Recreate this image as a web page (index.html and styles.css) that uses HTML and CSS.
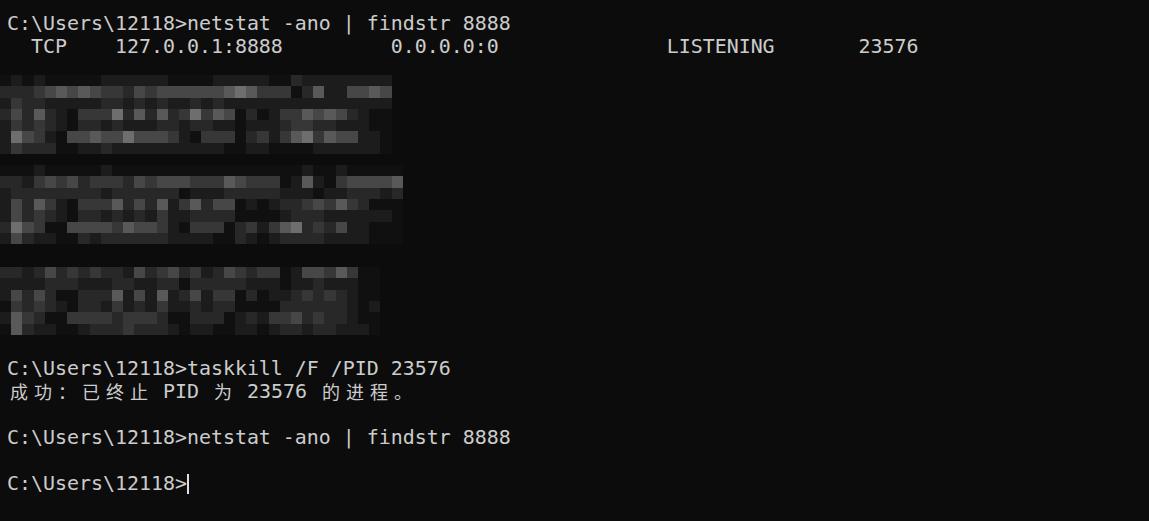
FILE: index.html
```html
<!DOCTYPE html>
<html>
<head>
<meta charset="utf-8">
<link rel="stylesheet" href="styles.css">
</head>
<body>
<div class="term">
<div class="line">C:\Users\12118&gt;netstat -ano | findstr 8888</div>
<div class="line">  TCP    127.0.0.1:8888         0.0.0.0:0              LISTENING       23576</div>
<div class="hidden">
  <div class="mosaic m1" data-rows="01010000011111100001111100211111111 22234545433243444444565333025114454 13221111122121211212111111111111111 24252103336252523635402013354542100 13232102212111221221101112332211100 16431044544644431033302313563544110 13222001121111111111001100001111110"></div>
  <div class="mosaic m2" data-rows="000100000100000000000000000100100000 221343423332434443335433301510344445 122222222122222201112222211101122212 142531033352425135244010122343532000 142321022121213112222000012221111110 264300444435443103330231356232411000 142110021222222111100210122221111000"></div>
  <div class="mosaic m3" data-rows="2212423232214234231243233014435300 1111222111221122022222111011211100 1424200222514151241330201123232100 0323210221312131121220000222222101 1532003333233320022201213342322100 0521100122232221011001101221221110"></div>
</div>
<div class="line">C:\Users\12118&gt;taskkill /F /PID 23576</div>
<div class="line"><span class="w">成</span><span class="w">功</span><span class="w">：</span><span class="w">已</span><span class="w">终</span><span class="w">止</span> PID <span class="w">为</span> 23576 <span class="w">的</span><span class="w">进</span><span class="w">程</span><span class="w">。</span></div>
<div class="line"> </div>
<div class="line">C:\Users\12118&gt;netstat -ano | findstr 8888</div>
<div class="line"> </div>
<div class="line">C:\Users\12118&gt;<span class="cursor"></span></div>
</div>
<script src="script.js"></script>
</body>
</html>
```
FILE: styles.css
```css
html, body {
  margin: 0;
  padding: 0;
  background: #0c0c0c;
}
body {
  width: 1149px;
  height: 521px;
  overflow: hidden;
}
.term {
  padding: 12px 0 0 7px;
  font-family: "DejaVu Sans Mono", "Liberation Mono", monospace;
  font-size: 19.93px;
  color: #cccccc;
}
.line {
  height: 23px;
  line-height: 23px;
  white-space: pre;
}
.w {
  display: inline-block;
  width: 24px;
  text-align: center;
  vertical-align: top;
  font-family: "Noto Sans CJK SC", sans-serif;
  font-size: 18px;
  line-height: 23px;
  height: 23px;
}
.cursor {
  display: inline-block;
  width: 2px;
  height: 20px;
  background: #e0e0e0;
  vertical-align: -4px;
}
.hidden {
  height: 299px;
  margin-left: -7px;
  display: flex;
  flex-direction: column;
}
.m1 { margin-top: 17px; }
.m2 { margin-top: 11px; }
.m3 { margin-top: 23px; }
.mrow {
  display: flex;
  height: 11.3px;
}
.mrow i {
  display: block;
  width: 11.2px;
  height: 100%;
  flex: none;
}
.l0 { background: #101010; }
.l1 { background: #1c1c1c; }
.l2 { background: #282828; }
.l3 { background: #373737; }
.l4 { background: #474747; }
.l5 { background: #595959; }
.l6 { background: #6e6e6e; }
```
FILE: script.js
```js
document.querySelectorAll('.mosaic').forEach(function (m) {
  m.getAttribute('data-rows').split(' ').forEach(function (r) {
    var row = document.createElement('div');
    row.className = 'mrow';
    for (var k = 0; k < r.length; k++) {
      var c = document.createElement('i');
      c.className = 'l' + r[k];
      row.appendChild(c);
    }
    m.appendChild(row);
  });
});
```
